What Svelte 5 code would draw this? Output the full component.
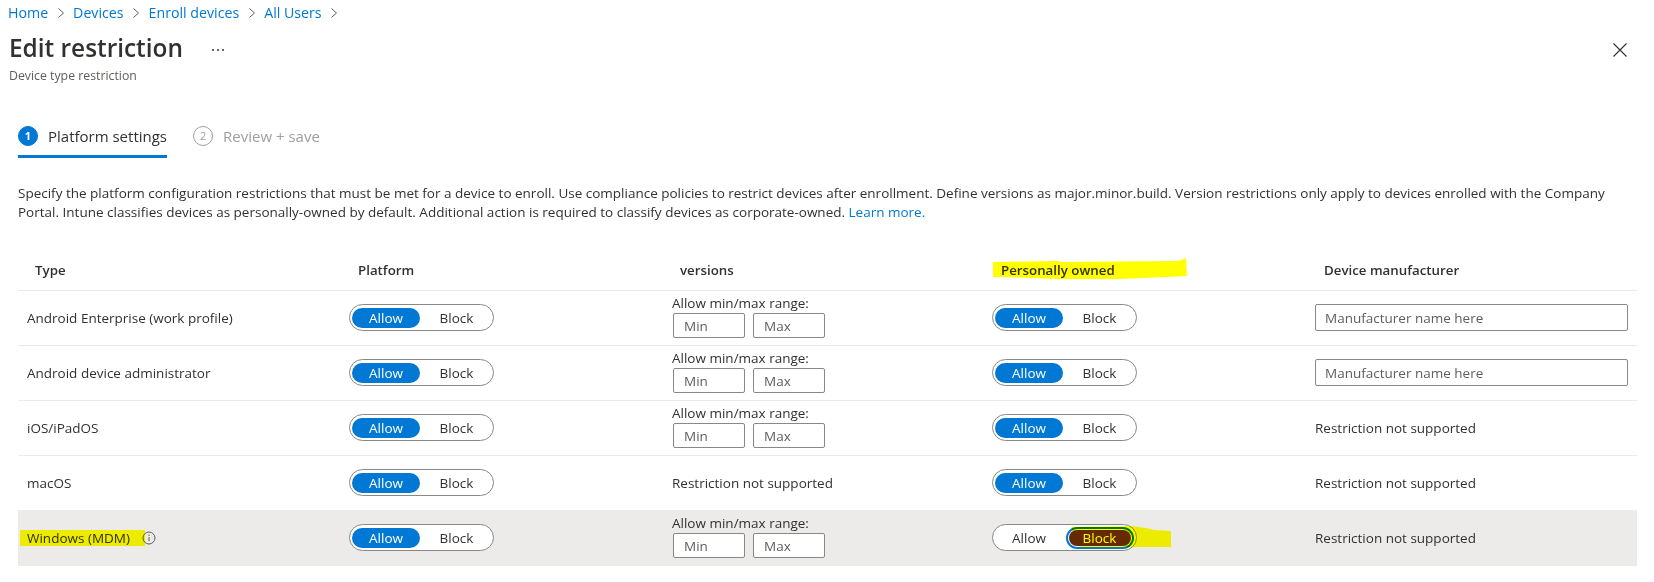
<script>
  const rows = [
    { type: 'Android Enterprise (work profile)', range: true, maker: true },
    { type: 'Android device administrator', range: true, maker: true },
    { type: 'iOS/iPadOS', range: true, maker: false },
    { type: 'macOS', range: false, maker: false },
    { type: 'Windows (MDM)', range: true, maker: false, info: true, selected: true }
  ];
  const crumbs = ['Home', 'Devices', 'Enroll devices', 'All Users'];
</script>

<div class="page">
  <nav class="crumbs">
    {#each crumbs as c}
      <a href="#top">{c}</a>
      <svg class="chev" width="8" height="12" viewBox="0 0 8 12"><path d="M1.5 1.5 6.5 6 1.5 10.5" fill="none" stroke="#605e5c" stroke-width="1"/></svg>
    {/each}
  </nav>

  <header class="head">
    <div class="titlebar">
      <h1>Edit restriction</h1>
      <svg class="more" width="14" height="4" viewBox="0 0 14 4"><circle cx="2" cy="2" r="1" fill="#323130"/><circle cx="7" cy="2" r="1" fill="#323130"/><circle cx="12" cy="2" r="1" fill="#323130"/></svg>
      <svg class="close" width="16" height="16" viewBox="0 0 16 16"><path d="M1.5 1.5 14.5 14.5M14.5 1.5 1.5 14.5" stroke="#323130" stroke-width="1.1" fill="none"/></svg>
    </div>
    <p class="sub">Device type restriction</p>
  </header>

  <div class="steps">
    <div class="step active"><span class="num">1</span><span>Platform settings</span></div>
    <div class="step"><span class="num">2</span><span>Review + save</span></div>
  </div>

  <p class="desc">Specify the platform configuration restrictions that must be met for a device to enroll. Use compliance policies to restrict devices after enrollment. Define versions as major.minor.build. Version restrictions only apply to devices enrolled with the Company<br>Portal. Intune classifies devices as personally-owned by default. Additional action is required to classify devices as corporate-owned. <a href="#top">Learn more.</a></p>

  <div class="table">
    <div class="row hdr">
      <div class="th first">Type</div>
      <div class="th">Platform</div>
      <div class="th ver">versions</div>
      <div class="th">Personally owned</div>
      <div class="th">Device manufacturer</div>
    </div>
    {#each rows as r}
      <div class="row" class:selected={r.selected}>
        <div class="cell name">{r.type}{#if r.info}<svg class="info" width="14" height="14" viewBox="0 0 14 14"><circle cx="7" cy="7" r="6" fill="none" stroke="#605e5c"/><path d="M7 6v4.2" stroke="#605e5c"/><circle cx="7" cy="4.2" r=".7" fill="#605e5c"/></svg>{/if}</div>
        <div class="cell">
          <div class="toggle"><span class="opt on">Allow</span><span class="opt" class:plain={r.selected}>Block</span></div>
        </div>
        <div class="cell">
          {#if r.range}
            <div class="range">
              <div class="rlabel">Allow min/max range:</div>
              <div class="rinputs"><input placeholder="Min" /><input placeholder="Max" /></div>
            </div>
          {:else}
            Restriction not supported
          {/if}
        </div>
        <div class="cell">
          {#if r.selected}
            <div class="toggle"><span class="opt plain">Allow</span><span class="opt focus">Block</span></div>
          {:else}
            <div class="toggle"><span class="opt on">Allow</span><span class="opt">Block</span></div>
          {/if}
        </div>
        <div class="cell">
          {#if r.maker}
            <input class="maker" placeholder="Manufacturer name here" />
          {:else}
            Restriction not supported
          {/if}
        </div>
      </div>
    {/each}
  </div>

  <svg class="marks" width="1654" height="582" viewBox="0 0 1654 582">
    <path d="M993 262 1058 261 1062 262 1178 261 1186 258 1187 276 1120 279 1060 279 1000 277 993 277Z" fill="#ffff00"/>
    <rect x="20" y="530" width="125" height="16" fill="#ffff00"/>
    <path d="M1071 527 1131 526 1146 528 1155 530 1171 531 1171 547 1080 547Z" fill="#ffff00"/>
  </svg>
</div>

<style>
  :global(body) { margin: 0; background: #fff; }
  .page {
    position: relative;
    width: 1654px;
    height: 582px;
    overflow: hidden;
    font-family: "Open Sans", "Noto Sans", sans-serif;
    font-size: 13.5px;
    color: #323130;
  }
  a { color: #0078d4; text-decoration: none; }
  .crumbs {
    display: flex;
    align-items: center;
    gap: 8.5px;
    height: 25px;
    padding-left: 8px;
    font-size: 14.2px;
  }
  .head { padding: 9px 9px 0; }
  .titlebar { display: flex; align-items: center; height: 28px; }
  h1 { margin: 0; font-size: 24.4px; font-weight: 600; line-height: 28px; }
  .more { margin: 3px 0 0 28px; }
  .close { margin: 3px 17px 0 auto; }
  .sub { margin: 6px 0 0; font-size: 12.3px; line-height: 16px; color: #605e5c; }
  .steps { display: flex; gap: 26px; margin: 42px 0 0 18px; height: 33px; }
  .step {
    display: flex;
    align-items: flex-start;
    gap: 10px;
    height: 29px;
    font-size: 15px;
    line-height: 20px;
    color: #a19f9d;
  }
  .step.active { color: #323130; border-bottom: 3px solid #0078d4; }
  .num {
    box-sizing: border-box;
    width: 20px;
    height: 20px;
    border-radius: 50%;
    border: 1px solid #a19f9d;
    font-size: 11px;
    line-height: 17px;
    text-align: center;
  }
  .active .num { background: #0078d4; border-color: #0078d4; color: #fff; font-weight: 700; }
  .desc { margin: 25px 0 0 18px; line-height: 19px; white-space: nowrap; }
  .table { margin: 29px 0 0 18px; width: 1619px; }
  .row {
    display: grid;
    grid-template-columns: 331px 323px 320px 323px 322px;
    height: 54px;
    border-bottom: 1px solid #edebe9;
  }
  .row.hdr { height: 37px; padding-bottom: 2px; align-items: center; }
  .row.selected { background: #edebe9; border-bottom-color: transparent; }
  .th { font-weight: 600; padding-left: 9px; font-size: 13.3px; }
  .th.first { padding-left: 17px; }
  .th.ver { padding-left: 8px; }
  .cell { display: flex; align-items: center; padding-bottom: 1px; }
  .name { padding-left: 9px; }
  .info { margin-left: 12px; }
  .toggle {
    box-sizing: border-box;
    display: grid;
    grid-template-columns: 68px 69px;
    gap: 2px;
    align-items: center;
    width: 145px;
    height: 27px;
    padding: 0 2px;
    border: 1px solid #8a8886;
    border-radius: 14px;
    background: #fff;
  }
  .opt { height: 20px; line-height: 20px; text-align: center; border-radius: 10px; }
  .opt.on { background: #0078d4; color: #fff; }
  .opt.plain { background: #fff; }
  .opt.focus {
    background: #662a00;
    color: #fff;
    box-shadow: 0 0 0 1px #fff, 0 0 0 3px #0078d4;
    height: 16px;
    line-height: 16px;
    justify-self: center;
    width: 62px;
  }
  .range { margin-bottom: 3px; }
  .rlabel { line-height: 18px; height: 19px; }
  .rinputs { display: flex; gap: 8px; padding-left: 1px; }
  input {
    box-sizing: border-box;
    font: inherit;
    color: #323130;
    border: 1px solid #8a8886;
    border-radius: 2px;
    background: #fff;
    outline: none;
  }
  input::placeholder { color: #605e5c; opacity: 1; }
  .rinputs input { width: 72px; height: 25px; padding: 0 10px; }
  .maker { width: 313px; height: 27px; padding: 0 9px; }
  .marks { position: absolute; left: 0; top: 0; mix-blend-mode: multiply; pointer-events: none; }
</style>
